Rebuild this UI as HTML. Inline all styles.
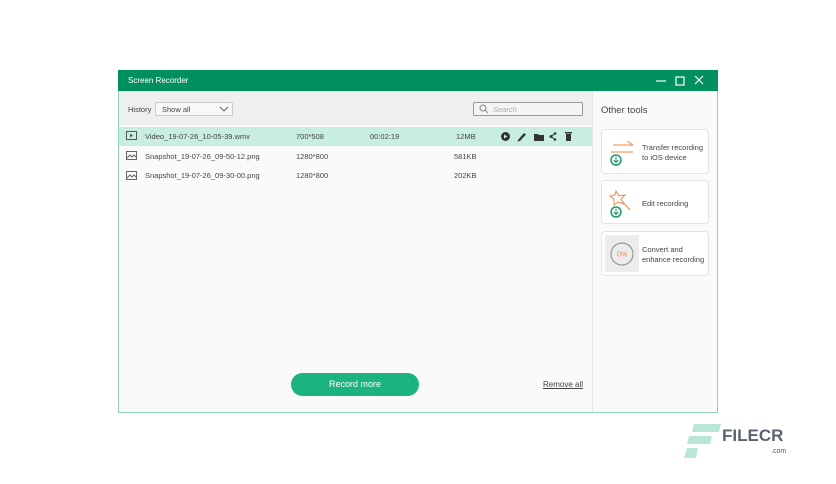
<!DOCTYPE html>
<html><head><style>
*{margin:0;padding:0;box-sizing:border-box}
body{width:836px;height:484px;background:#fff;font-family:"Liberation Sans",sans-serif;position:relative;overflow:hidden}
.a{position:absolute}
.win{left:118px;top:70px;width:600px;height:343px;border:1px solid #8fd4b8;background:#fafafa}
.title{left:118px;top:70px;width:600px;height:21px;background:#00905d;color:#fff;font-size:8px;padding:6px 10px}
.t{font-size:7.5px;color:#444;position:absolute}
.card{position:absolute;left:601px;width:108px;background:#fff;border:1px solid #e3e3e3;border-radius:4px}
.card span{position:absolute;left:40px;font-size:7.5px;color:#444;line-height:10px}
</style></head><body>
<div class="a win"></div>
<div class="a title">Screen Recorder</div>
<svg class="a" style="left:652px;top:74px" width="60" height="14"><g stroke="#fff" stroke-width="1.2" fill="none"><line x1="4" y1="7" x2="14" y2="7"/><rect x="24" y="3" width="8" height="8"/><line x1="43" y1="2" x2="51" y2="10"/><line x1="51" y1="2" x2="43" y2="10"/></g></svg>
<div class="a" style="left:119px;top:91px;width:473px;height:34px;background:#efefef"></div>
<div class="a" style="left:592px;top:91px;width:1px;height:321px;background:#e5e5e5"></div>
<div class="t" style="left:128px;top:105px">History</div>
<div class="a" style="left:155px;top:102px;width:78px;height:14px;border:1px solid #ccc;background:#f8f8f8;border-radius:2px"></div>
<div class="t" style="left:162px;top:105px">Show all</div>
<svg class="a" style="left:219px;top:106px" width="10" height="6"><path d="M1 1 L5 5 L9 1" stroke="#666" fill="none"/></svg>
<div class="a" style="left:473px;top:102px;width:110px;height:14px;border:1px solid #999;border-radius:2px;background:#f5f5f5"></div>
<svg class="a" style="left:479px;top:104px" width="10" height="10"><circle cx="4" cy="4" r="3" stroke="#888" fill="none"/><line x1="6" y1="6" x2="9" y2="9" stroke="#888"/></svg>
<div class="t" style="left:493px;top:105px;color:#aaa;font-style:italic">Search</div>
<div class="a" style="left:119px;top:127px;width:473px;height:19px;background:#c8eedf"></div>
<svg class="a" style="left:126px;top:131px" width="11" height="9"><rect x=".5" y=".5" width="10" height="8" stroke="#555" fill="none"/><path d="M4 2.5 L7 4.5 L4 6.5Z" fill="#555"/></svg>
<svg class="a" style="left:126px;top:151px" width="11" height="9"><rect x=".5" y=".5" width="10" height="8" stroke="#666" fill="none"/><path d="M1 7 L4 4 L6 6 L8 4 L10 6" stroke="#666" fill="none"/></svg>
<svg class="a" style="left:126px;top:171px" width="11" height="9"><rect x=".5" y=".5" width="10" height="8" stroke="#666" fill="none"/><path d="M1 7 L4 4 L6 6 L8 4 L10 6" stroke="#666" fill="none"/></svg>
<div class="t" style="left:145px;top:132px">Video_19-07-26_10-05-39.wmv</div>
<div class="t" style="left:296px;top:132px">700*508</div>
<div class="t" style="left:370px;top:132px">00:02:19</div>
<div class="t" style="left:456px;top:132px">12MB</div>
<div class="t" style="left:145px;top:152px">Snapshot_19-07-26_09-50-12.png</div>
<div class="t" style="left:296px;top:152px">1280*800</div>
<div class="t" style="left:454px;top:152px">581KB</div>
<div class="t" style="left:145px;top:171px">Snapshot_19-07-26_09-30-00.png</div>
<div class="t" style="left:296px;top:171px">1280*800</div>
<div class="t" style="left:454px;top:171px">202KB</div>
<svg class="a" style="left:500px;top:131px" width="76" height="11"><g fill="#333"><circle cx="5.5" cy="5.5" r="4.5"/><path d="M4 3.5 L7.5 5.5 L4 7.5Z" fill="#c8eedf"/><path d="M18 9 L24 2 L26 3.5 L20 10 L17.5 10.5Z"/><path d="M34 3 h4 l1 1 h5 v6 h-10z"/><circle cx="51" cy="5.5" r="1.5"/><circle cx="55" cy="2.5" r="1.3"/><circle cx="55" cy="8.5" r="1.3"/><path d="M51 5.5 L55 2.5 M51 5.5 L55 8.5" stroke="#333"/><rect x="65" y="1" width="7" height="1.5"/><rect x="66" y="3" width="5" height="7"/></g></svg>
<div class="a" style="left:291px;top:373px;width:128px;height:23px;background:#1bb37f;border-radius:12px;color:#fff;font-size:9px;text-align:center;line-height:23px">Record more</div>
<div class="t" style="left:543px;top:380px;font-size:8px;text-decoration:underline">Remove all</div>
<div class="t" style="left:601px;top:105px;font-size:9.5px">Other tools</div>
<div class="card" style="top:129px;height:45px"><span style="top:13px">Transfer recording<br>to iOS device</span></div>
<svg class="a" style="left:607px;top:140px" width="30" height="28"><g stroke="#f0884a" fill="none"><line x1="6" y1="5" x2="26" y2="5"/><line x1="20" y1="1" x2="26" y2="5"/><line x1="4" y1="12" x2="26" y2="12"/></g><circle cx="9" cy="20" r="5" stroke="#1a9a6a" stroke-width="1.5" fill="#fff"/><path d="M9 16.5v6 M6.5 20l2.5 2.5 2.5-2.5" stroke="#1a9a6a" fill="none"/></svg>
<div class="card" style="top:180px;height:44px"><span style="top:18px">Edit recording</span></div>
<svg class="a" style="left:607px;top:188px" width="30" height="32"><path d="M9 3 L12 8 L18 7 L14 11 L17 16 L11 14 L7 17 L7 11 L3 8 L8 7Z" stroke="#f0884a" fill="none"/><line x1="15" y1="13" x2="23" y2="22" stroke="#f0884a"/><circle cx="9" cy="24" r="5" stroke="#1a9a6a" stroke-width="1.5" fill="#fff"/><path d="M9 20.5v6 M6.5 24l2.5 2.5 2.5-2.5" stroke="#1a9a6a" fill="none"/></svg>
<div class="card" style="top:231px;height:45px"><span style="top:13px">Convert and<br>enhance recording</span></div>
<div class="a" style="left:605px;top:235px;width:34px;height:37px;background:#ececec"></div>
<svg class="a" style="left:609px;top:241px" width="26" height="26"><circle cx="13" cy="13" r="11" stroke="#999" stroke-width="1.2" fill="none"/><text x="13" y="15.5" font-size="7" fill="#f0884a" text-anchor="middle" font-family="Liberation Sans">0%</text></svg>
<svg class="a" style="left:684px;top:424px" width="38" height="35"><g fill="#b8e8d5"><polygon points="10,0 37,0 35,8 8,8"/><polygon points="5,12 28,12 26,20 3,20"/><polygon points="3,24 14,24 12,34 0,34"/></g></svg>
<div class="a" style="left:722px;top:426px;font-size:17px;font-weight:bold;color:#5a6470">FILECR</div>
<div class="a" style="left:771px;top:448px;font-size:7px;color:#555">.com</div>
</body></html>
